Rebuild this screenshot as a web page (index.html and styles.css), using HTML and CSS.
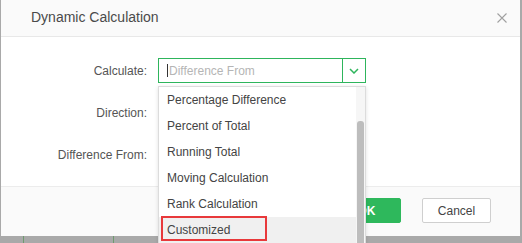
FILE: index.html
```html
<!DOCTYPE html>
<html lang="en">
<head>
    <meta charset="UTF-8">
    <title>Dynamic Calculation</title>
    <link rel="stylesheet" href="styles.css">
</head>
<body>
    <div class="screen">
        <div class="grid-line line-a"></div>
        <div class="grid-line line-b"></div>

        <div class="dialog">
            <div class="dialog-header">
                <span class="dialog-title">Dynamic Calculation</span>
                <svg class="close" width="10" height="10" viewBox="0 0 10 10">
                    <path d="M0.5 0.5 L9.5 9.5 M9.5 0.5 L0.5 9.5" stroke="#a0a0a0" stroke-width="1.1" fill="none"/>
                </svg>
            </div>

            <div class="dialog-body">
                <div class="form-row">
                    <label>Calculate:</label>
                    <div class="select active">
                        <span class="caret"></span>
                        <span class="placeholder">Difference From</span>
                        <span class="select-arrow">
                            <svg width="10" height="6" viewBox="0 0 10 6">
                                <path d="M1 1 L5 5 L9 1" stroke="#2eb55c" stroke-width="1.5" fill="none"/>
                            </svg>
                        </span>
                    </div>
                </div>
                <div class="form-row">
                    <label>Direction:</label>
                </div>
                <div class="form-row">
                    <label>Difference From:</label>
                </div>
            </div>

            <div class="dialog-footer">
                <button class="btn btn-primary">OK</button>
                <button class="btn">Cancel</button>
            </div>
        </div>

        <div class="dropdown">
            <ul class="options">
                <li>Percentage Difference</li>
                <li>Percent of Total</li>
                <li>Running Total</li>
                <li>Moving Calculation</li>
                <li>Rank Calculation</li>
                <li class="hover">Customized</li>
            </ul>
            <div class="scrollbar"><div class="thumb"></div></div>
        </div>

        <div class="highlight-box"></div>
    </div>
</body>
</html>
```

FILE: styles.css
```css
* {
    box-sizing: border-box;
}
body {
    margin: 0;
    font-family: "Liberation Sans", Arial, sans-serif;
    background-color: #a9a9a9;
}
.screen {
    position: relative;
    width: 522px;
    height: 243px;
    overflow: hidden;
    background-color: #a9a9a9;
    padding-left: 1px;
}
.grid-line {
    position: absolute;
    top: 236px;
    width: 1px;
    height: 7px;
    background-color: #6f9a6f;
}
.line-a {
    left: 23px;
}
.line-b {
    left: 113px;
}
.dialog {
    width: 519px;
    height: 236px;
    background-color: white;
    display: flex;
    flex-direction: column;
}
.dialog-header {
    height: 37px;
    flex: none;
    background-color: #fafafa;
    border-bottom: 1px solid #e8e8e8;
    display: flex;
    align-items: center;
    justify-content: space-between;
    padding: 0 13px 2px 30px;
}
.dialog-title {
    font-size: 14px;
    color: #4a4a4a;
}
.close {
    margin-top: 1px;
}
.dialog-body {
    height: 149px;
    flex: none;
    padding-top: 21px;
    display: flex;
    flex-direction: column;
    gap: 17px;
}
.form-row {
    height: 25px;
    display: flex;
    align-items: center;
    gap: 11px;
}
.form-row label {
    width: 146px;
    text-align: right;
    font-size: 12px;
    color: #555;
}
.select {
    width: 208px;
    height: 25px;
    border: 1px solid #2eb55c;
    display: flex;
    align-items: center;
    padding-left: 8px;
}
.caret {
    width: 1px;
    height: 13px;
    background-color: #333;
}
.placeholder {
    flex: 1;
    font-size: 12px;
    color: #b5b5b5;
    padding-left: 1px;
}
.select-arrow {
    width: 23px;
    height: 23px;
    border-left: 1px solid #2eb55c;
    display: flex;
    align-items: center;
    justify-content: center;
}
.dialog-footer {
    flex: 1;
    background-color: #fafafa;
    border-top: 1px solid #ececec;
    display: flex;
    justify-content: flex-end;
    align-items: flex-start;
    gap: 21px;
    padding: 11px 29px 0 0;
}
.btn {
    width: 69px;
    height: 25px;
    font-family: "Liberation Sans", Arial, sans-serif;
    font-size: 12px;
    color: #444;
    background-color: white;
    border: 1px solid #cfcfcf;
    border-radius: 2px;
}
.btn-primary {
    background-color: #2eb85c;
    border-color: #2eb85c;
    color: white;
    font-weight: bold;
}
.dropdown {
    position: absolute;
    left: 158px;
    top: 86px;
    width: 208px;
    height: 170px;
    background-color: white;
    border: 1px solid #dcdcdc;
    box-shadow: 0 1px 4px rgba(0,0,0,0.12);
    display: flex;
}
.options {
    list-style: none;
    margin: 0;
    padding: 0;
    flex: 1;
}
.options li {
    height: 26px;
    line-height: 26px;
    padding-left: 8px;
    font-size: 12px;
    color: #444;
}
.options li.hover {
    background-color: #f0f0f0;
}
.scrollbar {
    width: 9px;
    background-color: #f6f6f6;
    padding: 34px 1px 0 1px;
}
.thumb {
    height: 140px;
    background-color: #bdbdbd;
    border-radius: 3px;
}
.highlight-box {
    position: absolute;
    left: 161px;
    top: 216px;
    width: 106px;
    height: 25px;
    border: 2px solid #e8393b;
}
```
